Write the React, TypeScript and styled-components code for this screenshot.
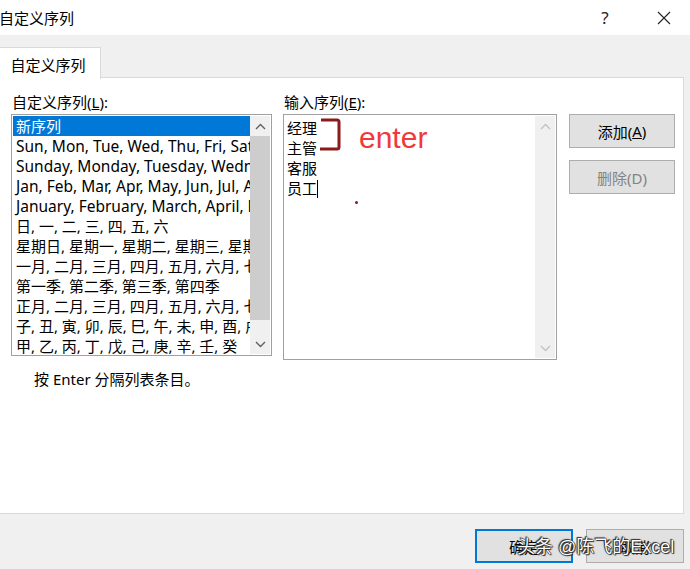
import React from 'react'
import styled, { createGlobalStyle } from 'styled-components'

const Global = createGlobalStyle`
  html, body {
    margin: 0;
    padding: 0;
    background: #f0f0f0;
  }
  * { box-sizing: border-box; }
`

const FONT = `"Noto Sans", "Noto Sans CJK SC", sans-serif`

const Window = styled.div`
  width: 690px;
  height: 569px;
  display: flex;
  flex-direction: column;
  background: #f0f0f0;
  font-family: ${FONT};
  font-size: 15px;
  color: #000;
  position: relative;
  overflow: hidden;
`

const TitleBar = styled.div`
  height: 35px;
  background: #fff;
  display: flex;
  align-items: center;
`

const Title = styled.div`
  flex: 1;
  font-size: 15px;
  margin-left: -1px;
`

const TitleButton = styled.div<{ $w: number }>`
  width: ${(p) => p.$w}px;
  height: 35px;
  display: flex;
  align-items: center;
  justify-content: center;
  font-size: 17px;
  color: #222;
`

const TabStrip = styled.div`
  height: 43px;
  padding-top: 12px;
  display: flex;
`

const Tab = styled.div`
  width: 101px;
  height: 32px;
  background: #fff;
  border: 1px solid #d9d9d9;
  border-left: none;
  border-bottom: none;
  display: flex;
  align-items: center;
  justify-content: center;
  font-size: 15px;
  position: relative;
  z-index: 1;
  padding: 1px 4px 0 0;
`

const Panel = styled.div`
  width: 684px;
  height: 437px;
  background: #fff;
  border: 1px solid #d9d9d9;
  border-left: none;
  margin-top: -1px;
  display: flex;
  padding: 15px 0 0 11px;
`

const Column = styled.div<{ $w: number; $ml?: number }>`
  width: ${(p) => p.$w}px;
  margin-left: ${(p) => p.$ml ?? 0}px;
  display: flex;
  flex-direction: column;
`

const Label = styled.div`
  height: 21px;
  line-height: 18px;
  padding-left: 1px;
  font-size: 15px;
  u { text-decoration: underline; }
`

const ListBox = styled.div<{ $h: number }>`
  height: ${(p) => p.$h}px;
  border: 1px solid #a0a0a0;
  display: flex;
  background: #fff;
`

const Items = styled.div`
  flex: 1;
  overflow: hidden;
  padding-top: 1px;
`

const Item = styled.div<{ $sel?: boolean; $latin?: boolean }>`
  height: 20px;
  line-height: 20px;
  padding-left: 3px;
  white-space: nowrap;
  margin-left: 1px;
  font-size: ${(p) => (p.$latin ? 15.5 : 15)}px;
  background: ${(p) => (p.$sel ? '#0078d7' : 'transparent')};
  color: ${(p) => (p.$sel ? '#fff' : '#000')};
`

const Scroll = styled.div`
  width: 20px;
  background: #f0f0f0;
  display: flex;
  flex-direction: column;
  margin: 1px 1px 1px 0;
`

const Arrow = styled.div<{ $dim?: boolean }>`
  height: 20px;
  display: flex;
  align-items: center;
  justify-content: center;
  color: ${(p) => (p.$dim ? '#c2c2c2' : '#606060')};
`

const Thumb = styled.div<{ $h: number }>`
  height: ${(p) => p.$h}px;
  background: #cdcdcd;
`

const Spacer = styled.div`
  flex: 1;
`

const Hint = styled.div`
  margin-top: 12px;
  padding-left: 23px;
  font-size: 15px;
`

const Lines = styled.div`
  flex: 1;
  padding: 3px 0 0 3px;
  position: relative;
`

const Line = styled.div`
  height: 20px;
  line-height: 20px;
  font-size: 15px;
`

const Caret = styled.span`
  display: inline-block;
  width: 1px;
  height: 18px;
  background: #000;
  vertical-align: -4px;
`

const Enter = styled.div`
  position: absolute;
  left: 75px;
  top: 6px;
  font-family: "Liberation Sans", sans-serif;
  font-size: 30px;
  color: #f03a3a;
`

const Dot = styled.div`
  position: absolute;
  left: 71px;
  top: 86px;
  width: 3px;
  height: 3px;
  border-radius: 50%;
  background: #8b1a1a;
`

const Bracket = styled.svg`
  position: absolute;
  left: 36px;
  top: 2px;
`

const ButtonColumn = styled.div`
  margin-left: 12px;
  padding-top: 21px;
  display: flex;
  flex-direction: column;
  gap: 12px;
`

const Btn = styled.div<{ $disabled?: boolean; $primary?: boolean; $w?: number }>`
  width: ${(p) => p.$w ?? 106}px;
  height: 34px;
  background: #e1e1e1;
  border: ${(p) => (p.$primary ? '2px solid #0078d7' : '1px solid #adadad')};
  color: ${(p) => (p.$disabled ? '#838383' : '#000')};
  display: flex;
  align-items: center;
  justify-content: center;
  font-size: 15px;
  u { text-decoration: underline; }
`

const Footer = styled.div`
  flex: 1;
  display: flex;
  justify-content: flex-end;
  align-items: flex-start;
  padding: 15px 6px 0 0;
  gap: 13px;
`

const Watermark = styled.div`
  position: absolute;
  left: 517px;
  top: 532px;
  font-size: 18px;
  font-family: "Liberation Sans", "Noto Sans CJK SC", sans-serif;
  color: #fff;
  text-shadow: 0 0 1px #000, 0 0 1px #000, 1px 1px 1px #333, -1px -1px 1px #333;
  white-space: nowrap;
`

const Up = () => (
  <svg width="11" height="7" viewBox="0 0 11 7">
    <path d="M1 6 L5.5 1.5 L10 6" fill="none" stroke="currentColor" strokeWidth="1.4" />
  </svg>
)
const Down = () => (
  <svg width="11" height="7" viewBox="0 0 11 7">
    <path d="M1 1 L5.5 5.5 L10 1" fill="none" stroke="currentColor" strokeWidth="1.4" />
  </svg>
)

const items = [
  '新序列',
  'Sun, Mon, Tue, Wed, Thu, Fri, Sat',
  'Sunday, Monday, Tuesday, Wednesday, Thursday, Friday, Saturday',
  'Jan, Feb, Mar, Apr, May, Jun, Jul, Aug, Sep, Oct, Nov, Dec',
  'January, February, March, April, May, June, July, August',
  '日, 一, 二, 三, 四, 五, 六',
  '星期日, 星期一, 星期二, 星期三, 星期四, 星期五, 星期六',
  '一月, 二月, 三月, 四月, 五月, 六月, 七月, 八月',
  '第一季, 第二季, 第三季, 第四季',
  '正月, 二月, 三月, 四月, 五月, 六月, 七月, 八月',
  '子, 丑, 寅, 卯, 辰, 巳, 午, 未, 申, 酉, 戌, 亥',
  '甲, 乙, 丙, 丁, 戊, 己, 庚, 辛, 壬, 癸',
]

export default function App() {
  return (
    <Window>
      <Global />
      <TitleBar>
        <Title>自定义序列</Title>
        <TitleButton $w={66}>?</TitleButton>
        <TitleButton $w={52}>
          <svg width="14" height="14" viewBox="0 0 14 14">
            <path d="M1 1 L13 13 M13 1 L1 13" stroke="#222" strokeWidth="1.1" />
          </svg>
        </TitleButton>
      </TitleBar>
      <TabStrip>
        <Tab>自定义序列</Tab>
      </TabStrip>
      <Panel>
        <Column $w={261}>
          <Label>自定义序列(<u>L</u>):</Label>
          <ListBox $h={242}>
            <Items>
              {items.map((t, i) => (
                <Item key={i} $sel={i === 0} $latin={i >= 1 && i <= 4}>
                  {t}
                </Item>
              ))}
            </Items>
            <Scroll>
              <Arrow><Up /></Arrow>
              <Thumb $h={184} />
              <Spacer />
              <Arrow><Down /></Arrow>
            </Scroll>
          </ListBox>
          <Hint>按 Enter 分隔列表条目。</Hint>
        </Column>
        <Column $w={274} $ml={11}>
          <Label>输入序列(<u>E</u>):</Label>
          <ListBox $h={246}>
            <Lines>
              <Line>经理</Line>
              <Line>主管</Line>
              <Line>客服</Line>
              <Line>员工<Caret /></Line>
              <Bracket width="24" height="36" viewBox="0 0 24 36">
                <path d="M1 3 L17 3 Q19 3 19 5 L19 30 Q19 32 17 32 L0 32" fill="none" stroke="#8b1a1a" strokeWidth="3" />
              </Bracket>
              <Enter>enter</Enter>
              <Dot />
            </Lines>
            <Scroll>
              <Arrow $dim><Up /></Arrow>
              <Spacer />
              <Arrow $dim><Down /></Arrow>
            </Scroll>
          </ListBox>
        </Column>
        <ButtonColumn>
          <Btn>添加(<u>A</u>)</Btn>
          <Btn $disabled>删除(D)</Btn>
        </ButtonColumn>
      </Panel>
      <Footer>
        <Btn $primary $w={98}>确定</Btn>
        <Btn $w={98}>取消</Btn>
      </Footer>
      <Watermark>头条 @陈飞的Excel</Watermark>
    </Window>
  )
}
